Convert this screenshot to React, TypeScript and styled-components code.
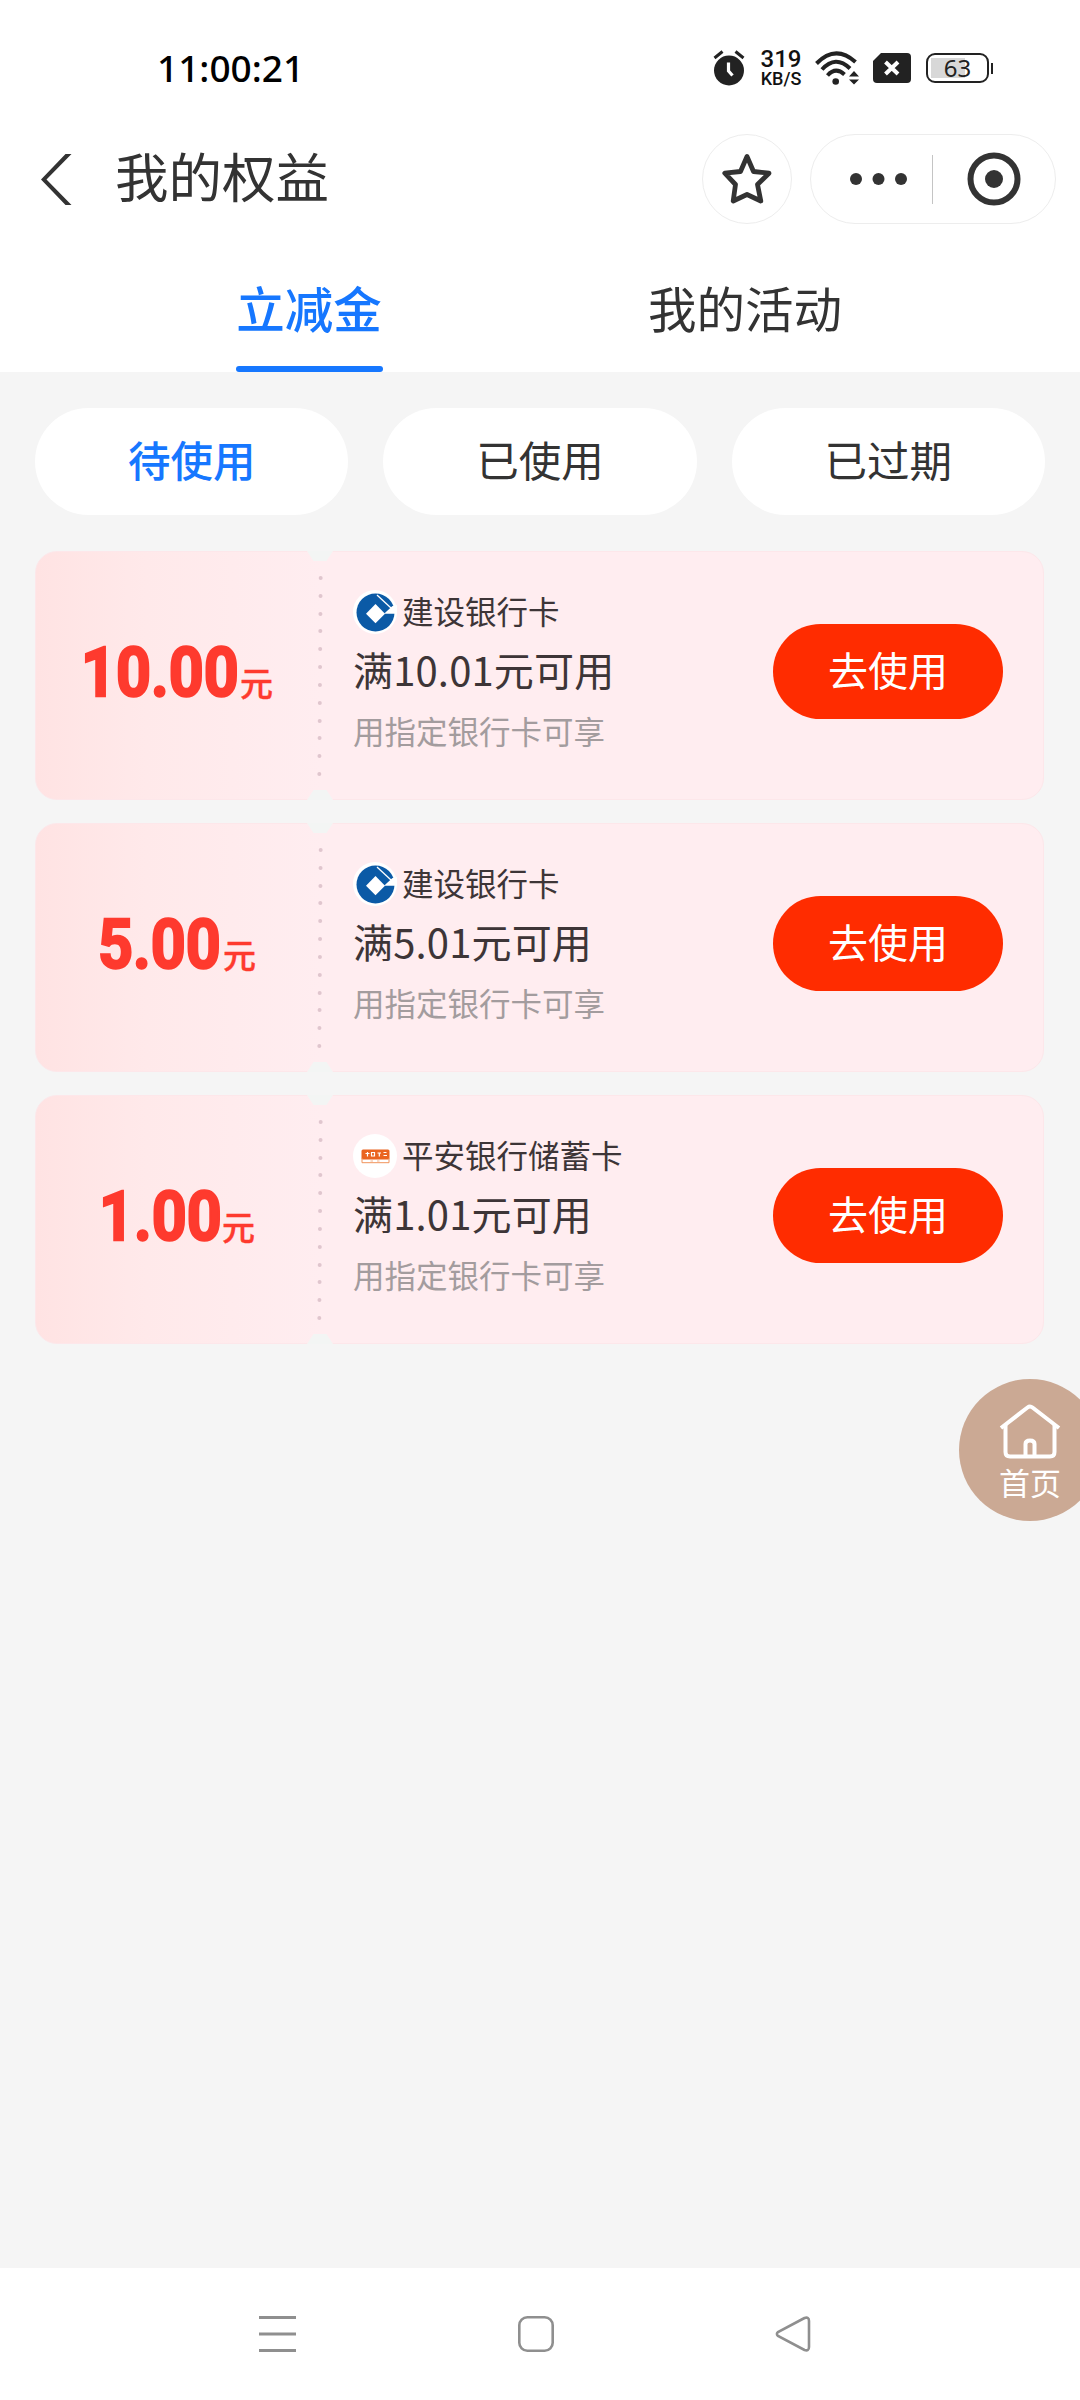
import React from "react";
import styled, { createGlobalStyle, css } from "styled-components";

const GlobalStyle = createGlobalStyle`
  * { box-sizing: border-box; }
  body {
    margin: 0;
    background: #f5f5f5;
    font-family: "Noto Sans CJK SC", sans-serif;
    color: #333;
  }
`;

const Screen = styled.div`
  display: flex;
  flex-direction: column;
  width: 1080px;
  height: 2400px;
  overflow: hidden;
  position: relative;
  background: #f5f5f5;
`;

const Top = styled.header`
  background: #fff;
  height: 372px;
  display: flex;
  flex-direction: column;
`;

const StatusBar = styled.div`
  height: 134px;
  padding: 45px 87px 0 157px;
  display: flex;
  justify-content: space-between;
  align-items: flex-start;
`;

const Clock = styled.div`
  font-size: 37px;
  line-height: 46px;
  font-weight: 500;
  color: #000;
  font-family: "Noto Sans", "Noto Sans CJK SC", sans-serif;
`;

const StatusIcons = styled.div`
  display: flex;
  height: 46px;
  align-items: center;
`;

const Speed = styled.div`
  width: 46px;
  margin: 1px 11px 0 13px;
  text-align: center;
  color: #111;
  font-family: Roboto, sans-serif;
  font-weight: 500;
`;
const SpeedValue = styled.div`
  font-size: 24px;
  line-height: 21px;
`;
const SpeedUnit = styled.div`
  font-size: 18px;
  line-height: 18px;
`;

const Battery = styled.div`
  width: 63px;
  height: 30px;
  margin-left: 15px;
  border: 2px solid #222;
  border-radius: 9px;
  padding: 2px;
  display: flex;
  align-items: center;
  justify-content: center;
  font: 400 24px/24px "Noto Sans", sans-serif;
  color: #222;
  background: linear-gradient(#d8d8d8, #d8d8d8) 3px 3px / 34px 20px no-repeat;
`;
const BatteryTip = styled.div`
  width: 2px;
  height: 11px;
  margin-left: 2px;
  background: #222;
`;

const TitleBar = styled.div`
  height: 90px;
  display: flex;
  align-items: center;
  padding: 0 24px 0 41px;
`;
const Title = styled.h1`
  margin: 0 auto 0 43px;
  font-size: 53.5px;
  line-height: 80px;
  font-weight: 400;
  transform: translateY(-4px);
`;
const RoundButton = styled.div`
  width: 90px;
  height: 90px;
  border: 1px solid #ededed;
  border-radius: 45px;
  display: flex;
  align-items: center;
  justify-content: center;
`;
const Capsule = styled.div`
  width: 246px;
  height: 90px;
  margin-left: 18px;
  border: 1px solid #ededed;
  border-radius: 45px;
  display: flex;
  align-items: center;
`;
const CapsuleHalf = styled.div<{ $w: number; $shift?: number }>`
  width: ${(p) => p.$w}px;
  padding-left: ${(p) => p.$shift ?? 0}px;
  display: flex;
  justify-content: center;
`;
const CapsuleLine = styled.div`
  width: 1px;
  height: 49px;
  background: #c4c4c4;
`;

const Tabs = styled.nav`
  flex: 1;
  display: flex;
  padding: 0 117px 0 91px;
`;
const Tab = styled.div<{ $active?: boolean }>`
  flex: 1;
  display: flex;
  flex-direction: column;
  align-items: center;
  font-size: 48.5px;
  line-height: 72px;
  padding-top: 47px;
  ${(p) =>
    p.$active &&
    css`
      color: #1677ff;
      font-weight: 500;
    `}
`;
const TabLine = styled.div`
  width: 147px;
  height: 6px;
  margin-top: auto;
  border-radius: 3px;
  background: #1677ff;
`;

const Main = styled.main`
  flex: 1;
  padding: 36px 35px 0;
`;
const Filters = styled.div`
  display: grid;
  grid-template-columns: repeat(3, 1fr);
  gap: 35px;
`;
const Filter = styled.div<{ $active?: boolean }>`
  height: 107px;
  border-radius: 54px;
  background: #fff;
  text-align: center;
  font-size: 42.5px;
  line-height: 102px;
  color: ${(p) => (p.$active ? "#1677ff" : "#333")};
  font-weight: ${(p) => (p.$active ? 500 : 400)};
`;

const Coupons = styled.div`
  margin: 36px 1px 0 0;
  display: flex;
  flex-direction: column;
  gap: 23px;
`;
const Card = styled.article`
  position: relative;
  height: 249px;
  border-radius: 22px;
  border: 1px solid #fde7ea;
  background: linear-gradient(90deg, #ffe3e3 0, #ffe9ea 110px, #ffedf0 285px);
  display: flex;
  &::before,
  &::after {
    content: "";
    position: absolute;
    left: 271px;
    width: 26px;
    height: 10px;
    background: #f3f5f4;
  }
  &::before {
    top: -1px;
    clip-path: polygon(0 0, 100% 0, 75% 100%, 25% 100%);
  }
  &::after {
    bottom: -1px;
    clip-path: polygon(25% 0, 75% 0, 100% 100%, 0 100%);
  }
`;
const Value = styled.div`
  width: 282px;
  padding: 76px 0 0 0;
  display: flex;
  justify-content: center;
  align-items: baseline;
  height: 180px;
  color: #fe3a2e;
`;
const Amount = styled.span<{ $w: number }>`
  width: ${(p) => p.$w}px;
  white-space: nowrap;
  font: 700 69px/90px Roboto, sans-serif;
  -webkit-text-stroke: 2.4px #fe3a2e;
  transform: scaleX(0.885);
  transform-origin: left;
`;
const Yuan = styled.span`
  font-size: 33px;
  font-weight: 500;
  -webkit-text-stroke: 0.4px #fe3a2e;
`;
const Perforation = styled.div`
  width: 4px;
  height: 200px;
  margin-top: 24px;
  display: flex;
  flex-direction: column;
  justify-content: space-between;
  transform: rotate(0.4deg);
`;
const Hole = styled.i`
  width: 4px;
  height: 4px;
  border-radius: 2px;
  background: #e0c6ce;
`;
const Info = styled.div`
  flex: 1;
  padding: 38px 0 0 31px;
`;
const Bank = styled.div`
  display: flex;
  align-items: center;
  height: 44px;
  gap: 5px;
  font-size: 31.5px;
  line-height: 40px;
  color: #3d3537;
`;
const BankName = styled.span`
  transform: translateY(-2px);
`;
const Rule = styled.div`
  font-size: 40px;
  line-height: 70px;
  height: 74px;
  color: #3d3537;
  letter-spacing: 0.15px;
`;
const Hint = styled.div`
  font-size: 31.5px;
  line-height: 44px;
  color: #a39c9e;
`;
const UseButton = styled.button`
  width: 230px;
  height: 95px;
  margin: 72px 40px 0 0;
  padding: 0 0 5px;
  border: 0;
  border-radius: 48px;
  background: #ff2c00;
  color: #fff;
  font-family: inherit;
  font-size: 40px;
`;

const HomeButton = styled.div`
  position: absolute;
  left: 959px;
  top: 1379px;
  width: 142px;
  height: 142px;
  border-radius: 50%;
  background: #cba994;
  color: #fff;
  display: flex;
  flex-direction: column;
  align-items: center;
  padding-top: 24px;
  font-size: 31px;
  line-height: 46px;
`;

const NavBar = styled.footer`
  height: 132px;
  background: #fff;
  display: flex;
  justify-content: space-between;
  align-items: center;
  padding: 0 269px 0 259px;
`;

const AlarmIcon = () => (
  <svg width="32" height="36" viewBox="0 0 32 36">
    <circle cx="16" cy="20.5" r="15" fill="#222" />
    <path d="M1.5 8L9.5 1.5M22.5 1.5L30.5 8" stroke="#222" strokeWidth="3" />
    <path d="M15.5 12.5V21L19.5 25.5" stroke="#fff" strokeWidth="3.2" fill="none" />
  </svg>
);

const WifiIcon = () => (
  <svg width="45" height="34" viewBox="0 0 45 34">
    <g fill="none" stroke="#222" strokeWidth="4">
      <path d="M1.5 12.5Q20.5 -7 40.5 11" />
      <path d="M7 18.5Q20.5 3.5 35 17.5" />
      <path d="M12.5 24.5Q20.5 15.5 29.5 23.5" />
    </g>
    <circle cx="20.7" cy="30.5" r="3.3" fill="#222" />
    <path d="M34 25.5L39 20L44 25.5ZM34 28.5L39 33.5L44 28.5Z" fill="#222" />
  </svg>
);

const SimSvg = styled.svg`
  margin-left: 13px;
`;
const SimIcon = () => (
  <SimSvg width="38" height="30" viewBox="0 0 38 30">
    <path d="M8 0H34Q38 0 38 4V26Q38 30 34 30H4Q0 30 0 26V8Z" fill="#222" />
    <path d="M12.5 9L25 21M25 9L12.5 21" stroke="#fff" strokeWidth="4" />
  </SimSvg>
);

const BackIcon = () => (
  <svg width="31" height="51" viewBox="0 0 31 51">
    <path d="M24.5 0H30.5L5.5 25.5L30.5 51H24.5L0 25.5Z" fill="#333" />
  </svg>
);

const StarIcon = () => (
  <svg width="50" height="52" viewBox="0 0 50 52">
    <path
      d="M25 3.5L31.5 18.5L47 20.2L35.5 31.5L38.8 48L25 41.5L11.2 48L13.5 31.5L2.8 20.2L18.5 18.5Z"
      fill="none"
      stroke="#333"
      strokeWidth="4.8"
      strokeLinejoin="round"
    />
  </svg>
);

const DotsIcon = () => (
  <svg width="57" height="12" viewBox="0 0 57 12" fill="#333">
    <circle cx="6" cy="6" r="6" />
    <circle cx="28.5" cy="6" r="6" />
    <circle cx="51" cy="6" r="6" />
  </svg>
);

const TargetIcon = () => (
  <svg width="54" height="54" viewBox="0 0 54 54">
    <circle cx="27" cy="27" r="23.5" fill="none" stroke="#333" strokeWidth="6" />
    <circle cx="27" cy="27" r="9" fill="#333" />
  </svg>
);

const CcbLogo = () => (
  <svg width="44" height="44" viewBox="0 0 44 44">
    <circle cx="22" cy="22" r="22" fill="#fff" />
    <circle cx="22.5" cy="22.5" r="19" fill="#0b5aa6" />
    <path d="M22.5 14L32 23.7L22.5 33.3L13 23.7Z" fill="#fff" />
    <path d="M31 23.7L39.5 16L44 15V23.7Z" fill="#fff" />
    <path d="M24 5L38 18" stroke="#fff" strokeWidth="1.3" />
  </svg>
);

const PinganLogo = () => (
  <svg width="44" height="44" viewBox="0 0 44 44">
    <circle cx="22" cy="22" r="22" fill="#fff" />
    <rect x="8.5" y="15.5" width="28" height="10" rx="1.5" fill="#ea6420" />
    <path d="M9 24V28.7H36V24" stroke="#f0935c" fill="none" />
    <path d="M12.5 19.5H16.5M14.5 18V22.5M18.5 18.5H21.5V22H18.5ZM24.5 19H28M26.3 19V22.5M30.5 18.5H33.5M30.5 21.5H34" stroke="#fff" strokeWidth="1.2" fill="none" />
    <path d="M17.5 27H20M24 27H26.5" stroke="#f3b48d" />
  </svg>
);

const HouseIcon = () => (
  <svg width="62" height="56" viewBox="0 0 62 56" fill="none" stroke="#fff" strokeWidth="4" strokeLinejoin="round">
    <path d="M2 25L28.5 4.5Q31 2.5 33.5 4.5L60 25" />
    <path d="M6.5 22V49Q6.5 53.5 11 53.5H51Q55.5 53.5 55.5 49V22" />
    <path d="M26.5 53V41Q26.5 37.5 31 37.5Q35.5 37.5 35.5 41V53" />
  </svg>
);

const coupons = [
  { amount: "10.00", width: 159, bank: "建设银行卡", min: "10.01", Logo: CcbLogo },
  { amount: "5.00", width: 125, bank: "建设银行卡", min: "5.01", Logo: CcbLogo },
  { amount: "1.00", width: 123, bank: "平安银行储蓄卡", min: "1.01", Logo: PinganLogo },
];

export default function App() {
  return (
    <Screen>
      <GlobalStyle />
      <Top>
        <StatusBar>
          <Clock>11:00:21</Clock>
          <StatusIcons>
            <AlarmIcon />
            <Speed>
              <SpeedValue>319</SpeedValue>
              <SpeedUnit>KB/S</SpeedUnit>
            </Speed>
            <WifiIcon />
            <SimIcon />
            <Battery>63</Battery>
            <BatteryTip />
          </StatusIcons>
        </StatusBar>
        <TitleBar>
          <BackIcon />
          <Title>我的权益</Title>
          <RoundButton>
            <StarIcon />
          </RoundButton>
          <Capsule>
            <CapsuleHalf $w={121} $shift={14}>
              <DotsIcon />
            </CapsuleHalf>
            <CapsuleLine />
            <CapsuleHalf $w={122}>
              <TargetIcon />
            </CapsuleHalf>
          </Capsule>
        </TitleBar>
        <Tabs>
          <Tab $active>
            立减金
            <TabLine />
          </Tab>
          <Tab>我的活动</Tab>
        </Tabs>
      </Top>
      <Main>
        <Filters>
          <Filter $active>待使用</Filter>
          <Filter>已使用</Filter>
          <Filter>已过期</Filter>
        </Filters>
        <Coupons>
          {coupons.map(({ amount, width, bank, min, Logo }) => (
            <Card key={amount}>
              <Value>
                <Amount $w={width}>{amount}</Amount>
                <Yuan>元</Yuan>
              </Value>
              <Perforation>
                {Array.from({ length: 12 }, (_, i) => (
                  <Hole key={i} />
                ))}
              </Perforation>
              <Info>
                <Bank>
                  <Logo />
                  <BankName>{bank}</BankName>
                </Bank>
                <Rule>满{min}元可用</Rule>
                <Hint>用指定银行卡可享</Hint>
              </Info>
              <UseButton>去使用</UseButton>
            </Card>
          ))}
        </Coupons>
      </Main>
      <HomeButton>
        <HouseIcon />
        首页
      </HomeButton>
      <NavBar>
        <svg width="37" height="36" viewBox="0 0 37 36" stroke="#8f8f8f" strokeWidth="3">
          <path d="M0 1.5H37M0 18H37M0 34.5H37" />
        </svg>
        <svg width="36" height="36" viewBox="0 0 36 36" fill="none" stroke="#8f8f8f" strokeWidth="2.6">
          <rect x="1.3" y="1.3" width="33.4" height="33.4" rx="8" />
        </svg>
        <svg width="36" height="36" viewBox="0 0 36 36" fill="none" stroke="#8f8f8f" strokeWidth="2.6">
          <path d="M29.5 2L3 16Q.8 18 3 20L29.5 34Q34 35.5 34 31V5Q34 .5 29.5 2Z" />
        </svg>
      </NavBar>
    </Screen>
  );
}
